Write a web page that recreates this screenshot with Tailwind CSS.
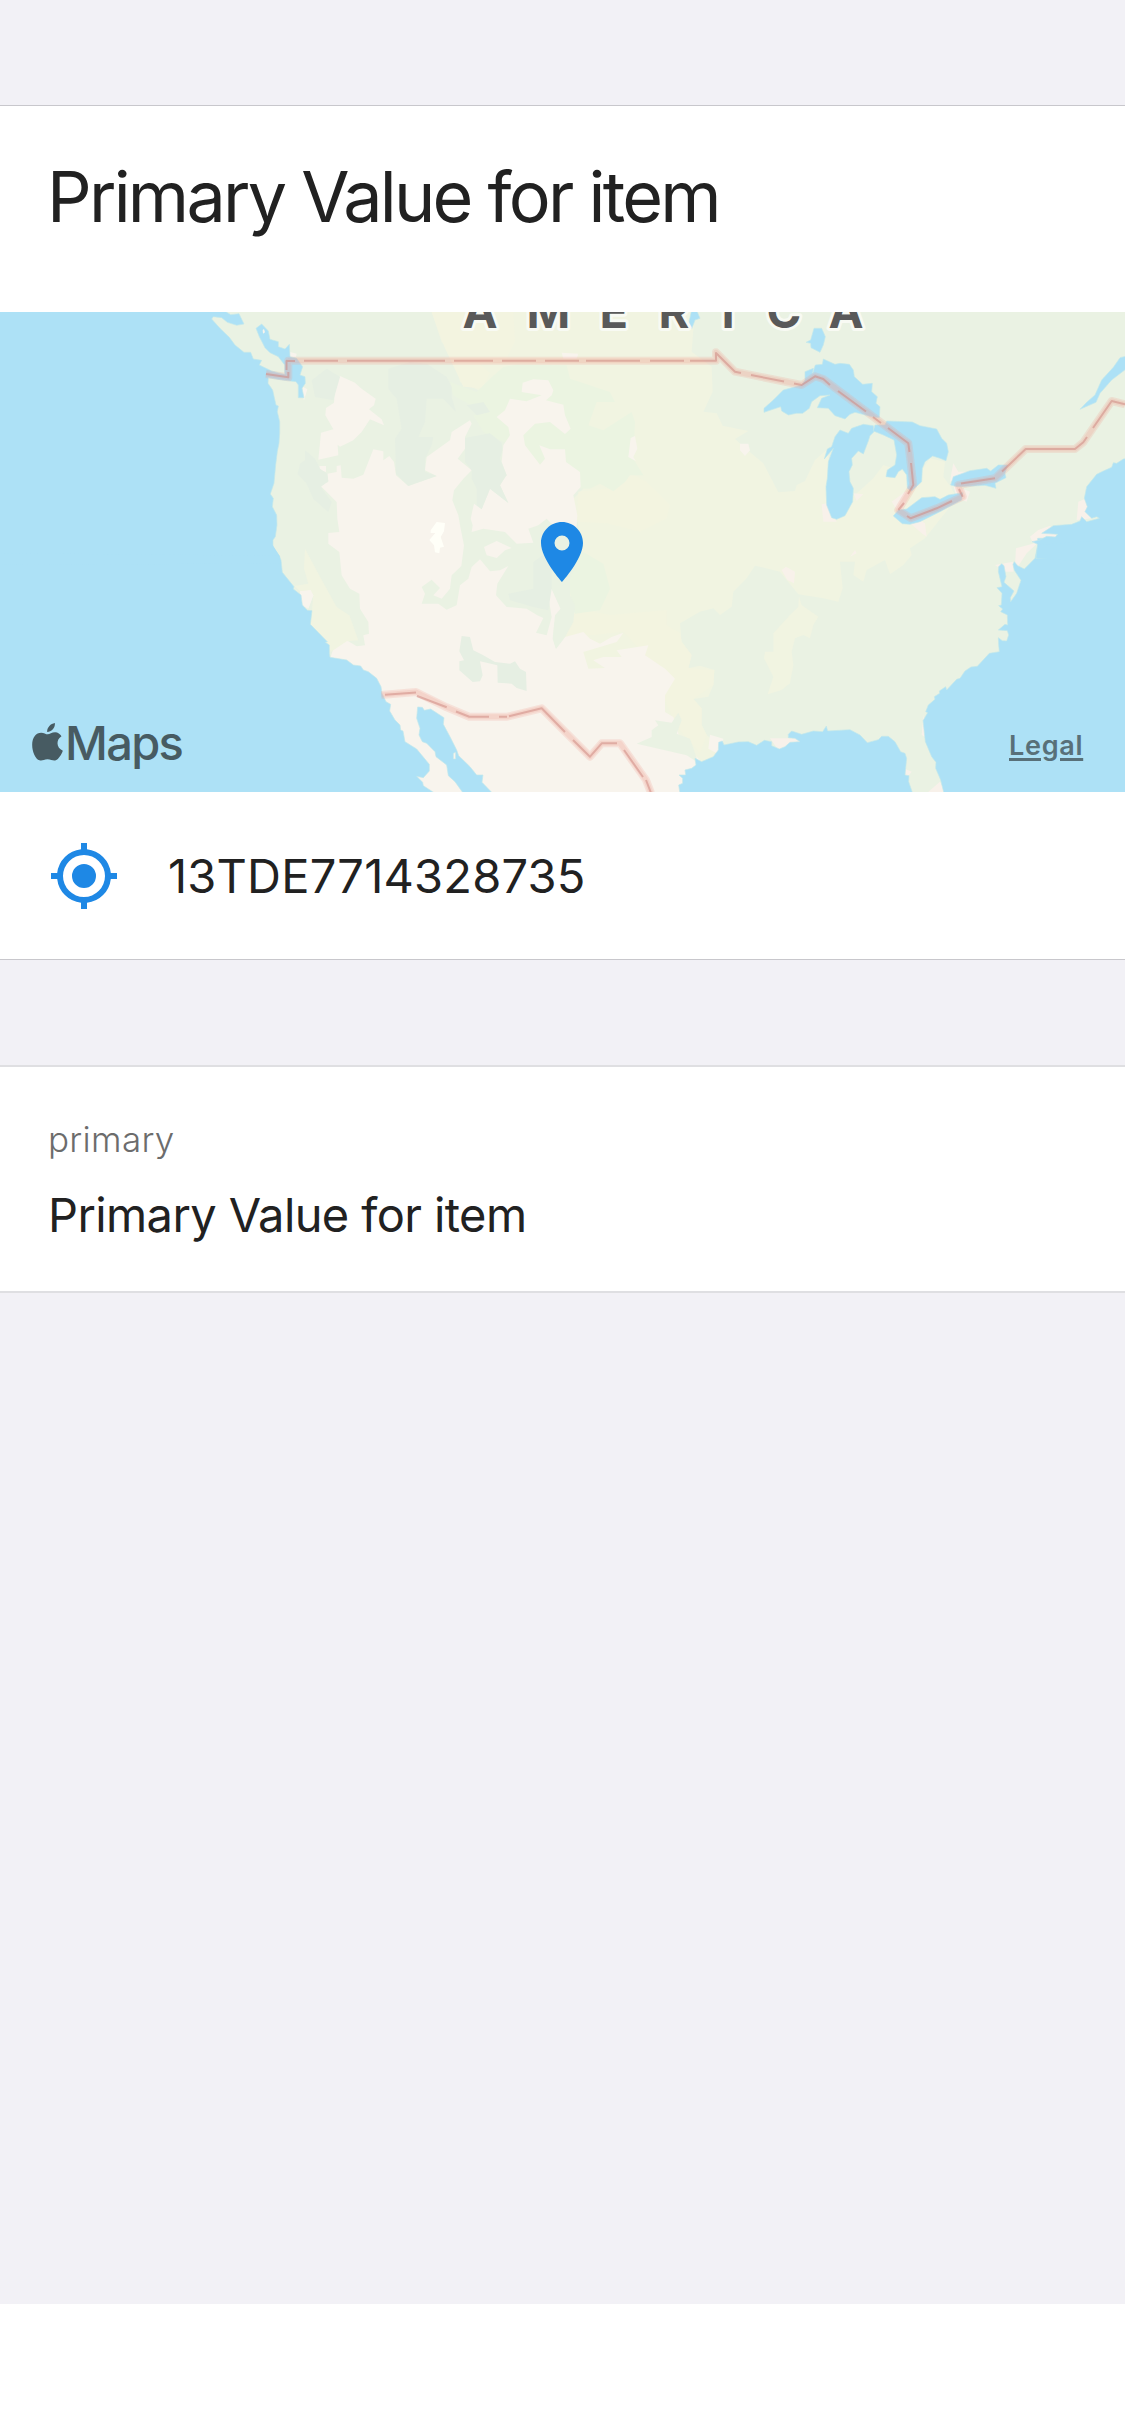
<!DOCTYPE html>
<html lang="en">
<head>
<meta charset="utf-8">
<title>Item details</title>
<script src="https://cdn.jsdelivr.net/npm/@tailwindcss/browser@4"></script>
</head>
<body class="bg-white">
<div class="flex h-[2436px] w-[1125px] flex-col overflow-hidden font-['Inter',sans-serif] text-[#212121]">
  <main class="flex h-[2304px] flex-col bg-[#f2f1f6] pt-[105px]">
    <section class="flex h-[855px] flex-col border-y border-[#c8c7cc] bg-white">
      <header class="flex h-[206px] items-start pt-[49px] pl-[47px]">
        <h1 class="text-[70px] leading-[84px] tracking-[-2.75px] whitespace-nowrap">Primary Value for item</h1>
      </header>
      <div class="relative h-[480px] shrink-0 overflow-hidden bg-[#eaf2e3]">
        <svg class="block h-[480px] w-[1125px]" viewBox="0 312 1125 480">
          <!-- plains -->
          <g transform="translate(500 305) scale(.33333)">
            <path fill="#f1f4e1" d="M-205 21L580 21L580 75L575 140L635 185L638 260L610 320L650 325L668 362L745 378L705 402L760 450L790 475L835 562L885 558L890 540L915 528L945 465L985 430L990 600L1065 570L1120 520L1150 480L1210 500L1270 490L1290 460L1335 470L1330 515L1352 545L1370 580L1275 700L1230 730L1235 750L1210 780L1170 808L1155 765L1100 795L1090 830L1060 810L1065 770L1020 770L1028 850L1015 890L970 880L895 868L840 800L765 782L740 820L700 860L695 905L660 930L640 910L600 920L540 955L545 1010L575 1050L565 1090L600 1082L643 1095L640 1140L625 1175L580 1182L605 1210L605 1260L620 1290L655 1320L640 1355L600 1370L490 1321L250 1121L190 1001L225 921L210 871L240 721L235 661L220 581L250 551L50 351L-30 271L-120 231L-130 166L-175 111Z"/>
            <path fill="#f3f4e0" d="M-205 21L40 21L45 110L20 160L-60 178L-30 205L-55 250L-110 245L-165 130ZM235 560L330 550L390 505L440 530L510 600L500 640L420 680L320 655L230 650Z"/>
            <path fill="#f3f4e0" d="M230 910L330 930L500 915L500 960L540 985L545 1010L575 1050L565 1090L643 1095L640 1140L580 1182L605 1210L605 1260L620 1290L600 1345L530 1265L435 1050L370 980L190 1000Z"/>
            <path fill="#f1f4e1" d="M897 875L905 900L955 935L940 960L930 1000L910 990L885 1000L875 1040L880 1080L870 1135L845 1155L803 1168L820 1115L792 1060L795 1040L820 1040L820 985L870 930L895 905Z"/>
          </g>
          <g transform="translate(250 312) scale(.33333)">
            <!-- grassland -->
            <path fill="#ebf4e1" d="M600 210L680 240L720 200L760 165L800 158L950 160L960 200L1080 240L1095 270L1040 270L1015 340L1060 355L1145 300L1155 330L1150 440L1180 490L1140 490L1125 510L1090 538L1050 515L1020 530L992 530L900 500L780 400L700 360L670 310L700 300L610 250ZM940 760L1000 720L1060 755L1080 830L1050 895L975 905Z"/>
            <!-- arid west -->
            <g fill="#f8f4ed">
              <path d="M270 192L315 212L335 230L377 260L372 280L357 292L395 322L402 340L360 322L335 360L310 385L270 404L263 398L265 430L205 443L213 362L250 352L226 310L228 288L252 272L256 222Z"/>
              <path d="M370 412L400 418L400 445L418 432L432 450L438 490L475 522L510 510L560 492L525 475L530 435L600 385L605 360L660 325L665 335L645 375L645 410L623 440L665 475L640 500L612 535L607 565L625 610L632 650L642 700L634 762L605 790L600 830L575 860L550 850L570 828L545 803L515 825L525 845L515 875L565 875L590 893L620 880L630 820L655 800L665 765L690 742L720 778L750 775L775 762L742 815L738 850L770 885L830 890L862 910L880 918L858 962L890 970L905 915L893 840L905 830L932 890L912 940L910 985L918 1010L945 975L1000 960L1020 980L1050 995L1085 975L1120 962L1100 990L1000 1020L1015 1070L1065 1068L1030 1045L1060 1035L1115 1035L1100 1015L1195 1000L1185 1030L1245 1070L1275 1100L1245 1150L1245 1200L1270 1215L1290 1280L1350 1345L1300 1445L500 1445L240 1040L250 1010L290 985L320 1003L345 1000L340 970L357 965L355 930L330 890L328 845L300 830L275 790L268 720L235 695L235 663L268 660L262 620L260 570L210 520L235 510L232 485L260 480L260 462L272 460L275 497L310 500L340 488Z"/>
              <path d="M740 315L765 295L780 260L830 268L875 250L815 240L818 212L850 202L895 205L910 235L905 250L888 265L940 278L945 310L962 350L945 366L900 330L855 335L820 370L825 400L870 458L885 440L868 400L900 412L945 412L948 450L990 480L992 525L970 550L982 610L978 665L925 655L890 620L865 640L835 650L850 692L800 695L765 660L700 650L665 660L668 640L662 620L672 575L695 592L720 530L775 573L750 520L770 490L755 450L760 400L780 370L775 345Z"/>
              <path d="M702 705L740 687L785 708L765 715L740 738L710 730ZM208 462L228 462L228 480L210 475ZM120 120L140 125L138 135L120 135ZM150 838L182 834L190 850L175 890L155 880ZM160 225L172 232L162 265L155 240Z"/>
              <path d="M1142 378L1155 372L1162 410L1150 435L1158 448L1135 435ZM1470 395L1495 395L1500 415L1485 432L1470 415ZM935 122L985 125L980 140L940 140Z"/>
            </g>
            <!-- mountain forest -->
            <path fill="#eaf2e3" d="M900 640L950 640L1000 700L960 800L960 850L975 880L970 930L945 975L918 1010L908 980L915 910L932 890L905 830L880 740ZM1160 1295L1205 1275L1205 1255L1225 1240L1215 1225L1265 1232L1285 1202L1295 1225L1280 1265L1320 1280L1345 1352L1310 1330Z"/>
            <g fill="#e6efe3">
              <path d="M415 170L480 150L530 155L590 195L605 225L605 255L618 300L580 260L530 260L525 330L505 375L550 375L545 400L525 440L525 480L560 492L500 512L475 522L438 485L435 380L455 350L440 260L415 230ZM185 205L230 170L270 195L250 265L195 255ZM165 415L195 440L210 470L232 485L235 508L212 525L245 570L235 600L190 560L170 515L143 485L150 455L165 445Z"/>
              <path d="M645 378L720 364L755 392L757 415L750 440L770 490L765 495L750 520L775 573L720 530L695 592L680 580L680 530L665 500L665 475L645 450ZM850 750L885 725L905 760L905 830L895 895L850 885L780 865L775 845L850 830ZM635 972L660 975L670 1015L700 1030L735 1050L780 1055L795 1048L810 1070L828 1080L830 1137L800 1128L785 1115L743 1112L742 1060L690 1048L698 1090L690 1108L668 1110L628 1075L628 1048L642 1045L628 1018ZM650 280L700 270L720 300L680 310Z"/>
            </g>
            <path fill="#f1f4e1" d="M165 710L205 785L260 885L298 910L325 985L290 988L242 1020L232 990L181 938L186 897L190 845L150 838L132 822L175 815L162 770Z"/>
            <path fill="#f8f4ed" d="M150 838L182 834L190 850L175 888L155 880Z"/>
            <path fill="#fffff8" d="M542 655L560 630L585 633L582 658L572 675L582 704L570 707L568 724L555 721L552 700L538 684L556 663L542 663Z"/>
            <path fill="#f8f4ed" d="M1380 1268L1420 1280L1412 1330L1375 1310Z"/>
          </g>
          <g transform="translate(740 305) scale(.33333)" fill="#f8f1ea">
            <path d="M245 598L262 595L290 650L250 650ZM340 565L370 568L350 588ZM455 590L495 560L510 565L480 630ZM510 655L545 648L555 655L560 695L545 685ZM635 500L640 475L655 500L690 500L630 530Z"/>
            <path d="M1015 590L1040 580L1055 640L1010 645ZM870 695L895 675L930 662L955 700L880 715ZM640 540L690 560L680 590L650 580Z"/>
            <path d="M824 800L828 730L895 712L860 745ZM765 780L820 770L820 800L795 800ZM90 1300L180 1300L175 1325L115 1335ZM550 1230L545 1290L560 1300ZM490 1390L515 1400L500 1420ZM560 1465L600 1430L620 1470ZM125 795L138 785L165 800L162 835L142 825ZM330 755L345 735L350 745Z"/>
          </g>
          <!-- water -->
          <g fill="#ade1f6" stroke="#c4e8ea" stroke-width="2">
            <g transform="translate(190 305) scale(.33333)">
              <path d="M-580 10L100 10L109 21L122 29L147 26L162 57L140 61L112 52L95 38L70 35L65 42L90 70L118 97L135 120L162 142L182 142L190 162L215 166L208 180L245 198L275 206L284 208L284 180L265 155L240 143L225 128L208 95L198 70L215 57L235 78L240 103L265 110L265 125L285 132L298 118L300 155L320 160L338 185L330 210L345 215L346 235L336 250L342 278L325 278L325 240L318 230L270 224L235 218L234 235L248 255L258 300L265 303L262 320L269 350L269 385L267 415L262 440L257 480L252 535L241 567L250 580L247 605L260 630L261 660L256 695L249 705L249 725L270 755L-580 755Z"/>
              <path stroke="none" fill="#f8f4ed" d="M218 75L222 72L225 82L219 86Z"/>
            </g>
            <g transform="translate(190 545) scale(.33333)">
              <path stroke="none" d="M-570 0L248 0L270 35L-570 60Z"/>
              <path d="M-580 35L269 35L273 45L277 82L312 125L310 132L333 150L337 180L352 196L366 197L361 238L412 290L406 292L418 300L418 325L420 337L470 345L490 360L512 363L520 375L535 380L560 400L573 425L576 445L588 470L602 478L599 498L615 525L630 540L632 555L639 558L645 590L680 612L718 658L718 678L700 698L680 694L698 712L700 722L735 745L-580 745Z"/>
              <path stroke="none" d="M-580 25L268 32L272 55L-580 60Z"/>
              <path d="M683 486L697 487L703 496L722 492L762 518L760 538L780 575L800 615L806 632L840 665L860 690L879 690L876 712L908 745L820 745L795 710L775 692L770 660L738 635L735 620L710 595L697 590L687 570L690 550L680 520Z"/>
              <path fill="#f8f4ed" d="M790 625L797 622L797 642L790 642Z"/>
            </g>
            <g transform="translate(500 545) scale(.33333)">
              <path d="M540 745L536 720L548 715L548 700L537 690L557 690L555 675L575 670L588 660L585 640L605 650L640 635L655 615L656 592L667 588L672 600L715 591L745 590L770 601L793 586L815 590L815 602L838 612L855 605L870 592L900 590L885 580L865 578L865 568L875 558L905 568L940 558L968 560L979 543L983 558L1050 554L1080 570L1102 593L1135 584L1145 574L1165 574L1185 590L1202 620L1215 625L1220 640L1215 690L1227 692L1226 710L1238 745Z"/>
            </g>
            <g transform="translate(740 545) scale(.33333)">
              <path d="M893 0L885 40L853 72L833 62L823 50L819 58L823 76L843 106L830 145L812 170L811 158L822 138L792 112L798 95L792 62L785 56L776 65L775 80L786 125L771 128L786 145L784 180L776 182L788 192L782 200L802 210L803 240L795 238L775 255L802 257L806 270L800 288L787 287L775 278L776 300L778 320L748 325L712 364L693 366L675 378L660 400L650 403L620 435L617 425L598 438L599 445L583 455L585 463L565 480L557 500L563 503L549 527L556 590L575 635L588 652L587 670L602 705L612 745L1165 745L1165 -20L893 -20Z"/>
            </g>
            <g transform="translate(740 305) scale(.33333)">
              <path d="M1165 460L1150 462L1130 475L1120 473L1115 487L1090 498L1070 508L1040 545L1033 580L1042 605L1035 620L1055 640L1070 635L1078 640L1040 650L1025 635L1020 648L995 658L940 662L905 685L953 688L946 696L920 694L900 705L876 710L893 718L888 760L1165 760Z"/>
              <path stroke="none" d="M895 720L1165 700L1165 780L892 760Z"/>
              <path d="M1165 152L1140 158L1120 187L1085 225L1065 270L1040 292L1020 313L1068 292L1080 265L1115 225L1165 187Z"/>
              <path d="M72 310L100 285L130 255L185 240L195 225L195 200L220 190L218 205L226 180L247 178L250 162L285 178L300 175L328 178L340 195L343 215L368 238L397 235L395 260L412 275L408 295L420 305L418 338L395 335L345 322L330 328L315 342L285 332L265 310L232 308L245 280L270 270L240 272L215 290L208 310L188 325L170 325L145 330L125 318L122 305L72 322Z"/>
              <path d="M300 375L325 385L335 370L370 358L400 362L402 380L390 392L385 408L370 447L355 438L335 460L337 480L327 500L330 530L340 550L338 590L315 632L290 643L275 638L260 600L258 545L262 520L265 470L280 430L253 462L262 432L275 425L285 395Z"/>
              <path d="M400 378L405 360L435 360L440 348L517 351L540 362L590 372L605 400L620 415L625 440L618 467L600 460L578 453L555 470L547 490L545 530L515 558L502 550L500 510L487 492L475 500L465 518L438 515L442 495L465 480L470 450L462 405L430 390Z"/>
              <path d="M460 633L475 615L500 612L545 578L585 575L600 583L625 570L668 563L665 585L600 620L540 650L510 658L487 656Z"/>
              <path d="M632 540L640 515L690 497L740 490L752 498L775 480L803 480L795 505L798 518L765 535L768 550L735 541L700 543L650 545Z"/>
              <path d="M222 70L245 70L256 95L250 120L240 142L213 128L212 115L198 112L212 105Z"/>
              <path d="M-145 15L-128 21L-120 40L-135 45L-145 72L-155 60Z"/>
            </g>
          </g>
          <!-- borders: soft band, then the dashed centre line -->
          <g fill="none" stroke-linejoin="round">
            <g stroke="#f2a092" stroke-opacity=".22" stroke-width="8">
              <path d="M266 374L288.300 377.300V360.700H716V352.300L735 371.700L801.700 385L815 376.300L823.300 379L908.300 443.300L913.300 485L898.300 510L910.700 518.300L936.700 508.300L962.700 496.700L958.300 485L995 478.300L1025.700 449H1075L1083.300 442.300L1111.700 401L1125 404.300"/>
              <path d="M381.300 695L416 692L446.700 707.300L469.300 716.700H507.300L541.700 708.300L590 756.700L601.700 743.300H620L646 780L651 793"/>
            </g>
            <g stroke="#f2a092" stroke-opacity=".2" stroke-width="5">
              <path d="M266 374L288.300 377.300V360.700H716V352.300L735 371.700L801.700 385L815 376.300L823.300 379L908.300 443.300L913.300 485L898.300 510L910.700 518.300L936.700 508.300L962.700 496.700L958.300 485L995 478.300L1025.700 449H1075L1083.300 442.300L1111.700 401L1125 404.300"/>
              <path d="M381.300 695L416 692L446.700 707.300L469.300 716.700H507.300L541.700 708.300L590 756.700L601.700 743.300H620L646 780L651 793"/>
            </g>
            <path stroke="#cf8a83" stroke-opacity=".55" stroke-width="2" d="M266 374L288.300 377.300V372M286.500 370V361H295M304 360.700H338M347 360.700H445M454 360.700H493M502 360.700H536M545 360.700H579M586 360.700H640M650 360.700H684M690 360.700H716V353L735 371.700L741 373M751 375L784 381.500M794 383.500L801.700 385L815 376.300L823.300 379L830 385M838 391L866 411.500M873 417L881 423M888 428L908.300 443.300L909.500 452M911 463L913.300 485L908 494M904 503L898.300 510M907 516L910.700 518.300L936.700 508.300L952 501M962.700 496.700L959 489M961 483.500L995 478.300M1002 471.500L1025.700 449H1075L1083.300 442.300L1087 437M1093 428L1111.700 401L1125 404.300"/>
            <path stroke="#cf8a83" stroke-opacity=".55" stroke-width="2" d="M385 694.700L416 692.500M417 696L446.700 707.300M456 711.500L469.300 716.700H489M499 716.700H507M509 716.300L541.700 708.300L565 732M573 740L590 756.700L601.700 743.300H617M624 750L643 777M646 780L651 793"/>
          </g>
          <text class="font-bold" x="462.500 526.500 599.500 658.500 721.500 766.500 828.500" y="328" font-size="47" fill="#595959" stroke="#f8faf3" stroke-width="6" stroke-linejoin="round" paint-order="stroke">AMERICA</text>
        </svg>
        <svg class="absolute top-[204px] left-[526px] h-[72px] w-[72px]" viewBox="0 0 24 24" fill="#1e88e5"><path d="M12 2C8.130 2 5 5.130 5 9c0 5.250 7 13 7 13s7-7.750 7-13c0-3.870-3.130-7-7-7zm0 9.500a2.500 2.500 0 0 1 0-5 2.500 2.500 0 0 1 0 5z"/></svg>
        <div class="absolute top-[403px] left-[32px] flex items-start text-[#475b62]">
          <svg class="mt-[8px] h-[38px] w-[31px]" viewBox="96 69 92 114" fill="currentColor"><path d="M164 69C166 83 155 96 141 96C140 83 151 71 164 69ZM184 109C176 114 172 121 172 130C172 140 178 148 188 152C184 164 175 177 167 181C159 184 153 178 142 178C131 178 126 184 118 181C106 177 96 155 96 134C96 112 108 98 123 98C131 98 137 103 143 103C148 103 155 97 165 97C173 97 180 102 184 109Z"/></svg>
          <span class="ml-[2px] text-[47px] leading-[56px] font-medium tracking-[-1.7px]">Maps</span>
        </div>
        <div class="absolute top-[418px] left-[1009px] w-[75px] text-[27px] leading-[32px] font-semibold tracking-[0.7px] text-[#587079] underline decoration-3 underline-offset-[3px]">Legal</div>
      </div>
      <div class="flex grow items-center pl-[48px]">
        <svg class="h-[72px] w-[72px]" viewBox="0 0 24 24" fill="#1e88e5"><path d="M12 8a4 4 0 1 0 0 8 4 4 0 0 0 0-8zm8.940 3A8.994 8.994 0 0 0 13 3.060V1h-2v2.060A8.994 8.994 0 0 0 3.060 11H1v2h2.060A8.994 8.994 0 0 0 11 20.940V23h2v-2.060A8.994 8.994 0 0 0 20.940 13H23v-2h-2.060zM12 19a7 7 0 1 1 0-14 7 7 0 0 1 0 14z"/></svg>
        <span class="ml-[48px] text-[47px] leading-[56px] tracking-[0.2px]">13TDE7714328735</span>
      </div>
    </section>
    <section class="mt-[105px] flex h-[228px] flex-col border-y-2 border-[#dfdfe2] bg-white pt-[48px] pl-[48px]">
      <span class="text-[35px] leading-[48px] font-light tracking-[0.3px] text-[#6c6c6c]">primary</span>
      <span class="mt-[24px] text-[47px] leading-[56px] tracking-[-0.6px]">Primary Value for item</span>
    </section>
  </main>
</div>
</body>
</html>
